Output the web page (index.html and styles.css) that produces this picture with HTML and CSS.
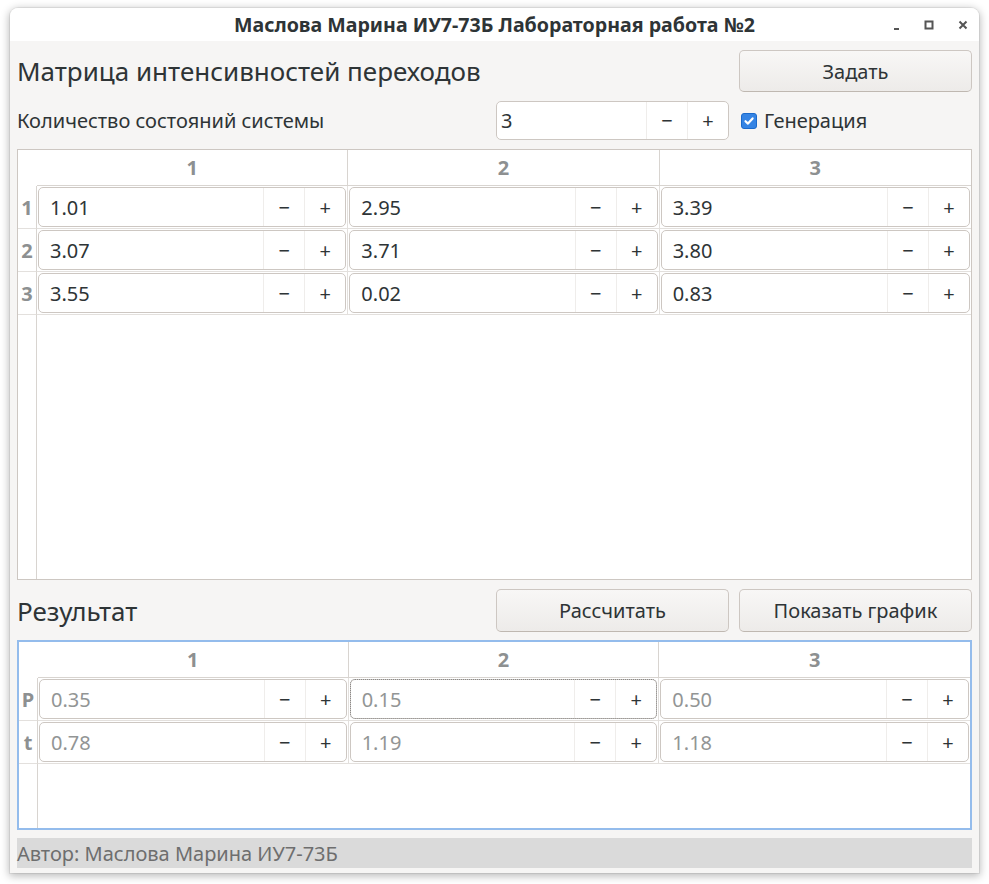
FILE: index.html
```html
<!DOCTYPE html>
<html lang="ru">
<head>
<meta charset="utf-8">
<title>Лабораторная работа №2</title>
<link rel="stylesheet" href="styles.css">
</head>
<body>
<div class="window">
  <div class="titlebar">
    <div class="title">Маслова Марина ИУ7-73Б Лабораторная работа №2</div>
    <div class="controls">
      <svg class="ctl min" width="16" height="16" viewBox="0 0 16 16"><rect x="5" y="11" width="5" height="2" fill="#555"/></svg>
      <svg class="ctl max" width="16" height="16" viewBox="0 0 16 16"><rect x="4.5" y="4.5" width="7" height="7" fill="none" stroke="#555" stroke-width="2"/></svg>
      <svg class="ctl close" width="16" height="16" viewBox="0 0 16 16"><path d="M4.5 4.5 L11.5 11.5 M11.5 4.5 L4.5 11.5" stroke="#555" stroke-width="2"/></svg>
    </div>
  </div>
  <div class="content">
    <div class="row row-top">
      <h1 class="heading span2">Матрица интенсивностей переходов</h1>
      <button class="btn">Задать</button>
    </div>
    <div class="row row-count">
      <div class="label">Количество состояний системы</div>
      <div class="spin"><span class="val">3</span><span class="sbtn">−</span><span class="sbtn">+</span></div>
      <label class="check"><span class="box"><svg width="12" height="12" viewBox="0 0 12 12"><path d="M2.5 6.2 L5 8.6 L9.6 3.4" fill="none" stroke="#fff" stroke-width="2.2" stroke-linecap="round" stroke-linejoin="round"/></svg></span>Генерация</label>
    </div>

    <div class="table t1">
      <div class="corner"></div>
      <div class="colhead">1</div>
      <div class="colhead">2</div>
      <div class="colhead last">3</div>

      <div class="rowhead">1</div>
      <div class="cell"><div class="spin"><span class="val">1.01</span><span class="sbtn">−</span><span class="sbtn">+</span></div></div>
      <div class="cell"><div class="spin"><span class="val">2.95</span><span class="sbtn">−</span><span class="sbtn">+</span></div></div>
      <div class="cell last"><div class="spin"><span class="val">3.39</span><span class="sbtn">−</span><span class="sbtn">+</span></div></div>

      <div class="rowhead">2</div>
      <div class="cell"><div class="spin"><span class="val">3.07</span><span class="sbtn">−</span><span class="sbtn">+</span></div></div>
      <div class="cell"><div class="spin"><span class="val">3.71</span><span class="sbtn">−</span><span class="sbtn">+</span></div></div>
      <div class="cell last"><div class="spin"><span class="val">3.80</span><span class="sbtn">−</span><span class="sbtn">+</span></div></div>

      <div class="rowhead">3</div>
      <div class="cell"><div class="spin"><span class="val">3.55</span><span class="sbtn">−</span><span class="sbtn">+</span></div></div>
      <div class="cell"><div class="spin"><span class="val">0.02</span><span class="sbtn">−</span><span class="sbtn">+</span></div></div>
      <div class="cell last"><div class="spin"><span class="val">0.83</span><span class="sbtn">−</span><span class="sbtn">+</span></div></div>

      <div class="rowfill"></div>
      <div class="fill"></div>
    </div>

    <div class="row row-result">
      <h2 class="heading">Результат</h2>
      <button class="btn">Рассчитать</button>
      <button class="btn">Показать график</button>
    </div>

    <div class="table t2">
      <div class="corner"></div>
      <div class="colhead">1</div>
      <div class="colhead">2</div>
      <div class="colhead last">3</div>

      <div class="rowhead">P</div>
      <div class="cell"><div class="spin dim"><span class="val">0.35</span><span class="sbtn">−</span><span class="sbtn">+</span></div></div>
      <div class="cell"><div class="spin dim focus"><span class="val">0.15</span><span class="sbtn">−</span><span class="sbtn">+</span></div></div>
      <div class="cell last"><div class="spin dim"><span class="val">0.50</span><span class="sbtn">−</span><span class="sbtn">+</span></div></div>

      <div class="rowhead">t</div>
      <div class="cell"><div class="spin dim"><span class="val">0.78</span><span class="sbtn">−</span><span class="sbtn">+</span></div></div>
      <div class="cell"><div class="spin dim"><span class="val">1.19</span><span class="sbtn">−</span><span class="sbtn">+</span></div></div>
      <div class="cell last"><div class="spin dim"><span class="val">1.18</span><span class="sbtn">−</span><span class="sbtn">+</span></div></div>

      <div class="rowfill"></div>
      <div class="fill"></div>
    </div>

    <div class="status">Автор: Маслова Марина ИУ7-73Б</div>
  </div>
</div>
</body>
</html>
```
FILE: styles.css
```css
* { box-sizing: border-box; }
html, body { margin: 0; padding: 0; }
body {
  background: #ffffff;
  font-family: "Noto Sans", "Open Sans", sans-serif;
  color: #2e3436;
  width: 989px;
  height: 884px;
  overflow: hidden;
}
.window {
  margin: 8px 0 0 10px;
  width: 969px;
  height: 865px;
  background: #f6f5f4;
  border-radius: 8px 8px 0 0;
  box-shadow: 0 2px 9px 1px rgba(0,0,0,0.28), 0 0 0 1px rgba(0,0,0,0.06);
  display: flex;
  flex-direction: column;
  overflow: hidden;
}
.titlebar {
  height: 33px;
  flex: none;
  background: #ffffff;
  position: relative;
  display: flex;
  align-items: center;
  justify-content: center;
}
.title {
  font-weight: bold;
  font-size: 19.6px;
  color: #2e3436;
}
.controls {
  position: absolute;
  right: 8px;
  top: 9px;
  display: flex;
}
.ctl { display: block; }
.ctl.max { margin-left: 16px; }
.ctl.close { margin-left: 18px; }
.content {
  flex: 1;
  display: flex;
  flex-direction: column;
  padding: 9px 7px 5px 7px;
}
.row {
  display: grid;
  grid-template-columns: 1fr 233px 233px;
  column-gap: 10px;
  align-items: center;
}
.row-top { height: 42px; }
.row-count { height: 39px; margin-top: 9px; }
.row-result { height: 43px; margin-top: 9px; }
.span2 { grid-column: span 2; }
.heading {
  margin: 0;
  font-size: 26px;
  font-weight: normal;
  color: #2e3436;
  align-self: center;
  white-space: nowrap;
}
.btn {
  height: 100%;
  font-family: inherit;
  font-size: 20px;
  color: #2e3436;
  background: linear-gradient(#f8f7f6, #edebe9);
  border: 1px solid #cdc7c2;
  border-bottom-color: #bfb8b1;
  border-radius: 5px;
  padding: 0;
}
.label { font-size: 20px; white-space: nowrap; }
.spin {
  display: flex;
  height: 100%;
  background: #ffffff;
  border: 1px solid #cdc7c2;
  border-radius: 5px;
  font-size: 20px;
  color: #2e3436;
}
.spin .val {
  flex: 1;
  display: flex;
  align-items: center;
  padding-left: 11px;
}
.row-count .spin .val { padding-left: 4px; }
.spin .sbtn {
  width: 41px;
  flex: none;
  display: flex;
  align-items: center;
  justify-content: center;
  border-left: 1px solid #efedeb;
  color: #2e3436;
}
.spin.dim .val { color: #929595; }
.spin.focus { outline: 1px dotted #8a8a8a; outline-offset: -1px; }
.check {
  display: flex;
  align-items: center;
  font-size: 20px;
  padding-left: 2px;
  white-space: nowrap;
}
.check .box {
  width: 16px;
  height: 16px;
  border-radius: 3px;
  background: #3584e4;
  border: 1px solid #1b6acb;
  display: flex;
  align-items: center;
  justify-content: center;
  margin-right: 7px;
}
.check .box svg { display: block; }
.table {
  margin-top: 9px;
  background: #ffffff;
  border: 1px solid #cdc7c2;
  display: grid;
  grid-template-columns: 19px 1fr 1fr 1fr;
}
.t1 { height: 431px; grid-template-rows: 36px 43px 43px 43px 1fr; }
.t2 {
  height: 190px;
  margin-top: 8px;
  border: 2px solid #94bcec;
  grid-template-columns: 19px 1fr 1fr 1fr;
  grid-template-rows: 36px 43px 43px 1fr;
}
.colhead {
  border-right: 1px solid #d8d4d0;
  border-bottom: 1px solid #d8d4d0;
  display: flex;
  align-items: center;
  justify-content: center;
  font-weight: bold;
  font-size: 20px;
  color: #8d9091;
}
.colhead.last, .cell.last { border-right: 0; }
.rowhead {
  border-right: 1px solid #d8d4d0;
  border-bottom: 1px solid #e3e0dd;
  display: flex;
  align-items: center;
  justify-content: center;
  font-weight: bold;
  font-size: 20px;
  color: #8d9091;
}
.cell {
  border-right: 1px solid #e3e0dd;
  border-bottom: 1px solid #e3e0dd;
  padding: 1px;
}
.rowfill { border-right: 1px solid #d8d4d0; }
.fill { grid-column: span 3; }
.status {
  margin-top: 8px;
  height: 30px;
  background: #dadada;
  color: #6e6e6e;
  font-size: 20px;
  display: flex;
  align-items: center;
  white-space: nowrap;
}
```
